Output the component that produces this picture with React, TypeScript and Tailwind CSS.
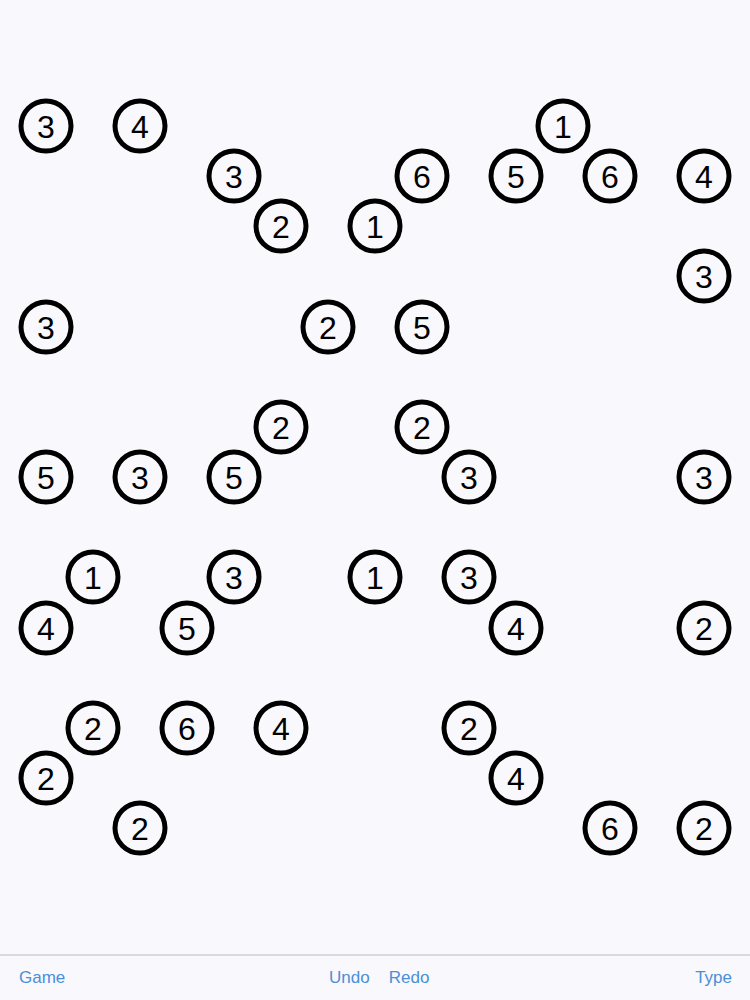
import React from "react";

// [col, row, value] on a 15x15 board
const islands: [number, number, number][] = [
  [0, 0, 3], [2, 0, 4], [11, 0, 1],
  [4, 1, 3], [8, 1, 6], [10, 1, 5], [12, 1, 6], [14, 1, 4],
  [5, 2, 2], [7, 2, 1],
  [14, 3, 3],
  [0, 4, 3], [6, 4, 2], [8, 4, 5],
  [5, 6, 2], [8, 6, 2],
  [0, 7, 5], [2, 7, 3], [4, 7, 5], [9, 7, 3], [14, 7, 3],
  [1, 9, 1], [4, 9, 3], [7, 9, 1], [9, 9, 3],
  [0, 10, 4], [3, 10, 5], [10, 10, 4], [14, 10, 2],
  [1, 12, 2], [3, 12, 6], [5, 12, 4], [9, 12, 2],
  [0, 13, 2], [10, 13, 4],
  [2, 14, 2], [12, 14, 6], [14, 14, 2],
];

const COL = 47;
const ROW = 50.15;
const X0 = 46;
const Y0 = 126;

export default function App() {
  return (
    <div
      className="w-[750px] h-[1000px] flex flex-col bg-[#f8f8fd] overflow-hidden"
      style={{ fontFamily: '"Liberation Sans", Arial, sans-serif' }}
    >
      <div className="relative flex-1">
        {islands.map(([c, r, v]) => (
          <div
            key={`${c}-${r}`}
            className="absolute w-[55px] h-[55px] -translate-x-1/2 -translate-y-1/2 rounded-full border-[5px] border-black bg-[#f8f8fd] flex items-center justify-center text-[32px] leading-none text-black"
            style={{ left: X0 + COL * c, top: Y0 + ROW * r }}
          >
            <span className="pt-[1px]">{v}</span>
          </div>
        ))}
      </div>
      <div className="h-[46px] shrink-0 border-t-2 border-[#d9d9de] flex items-center justify-between pl-[19px] pr-[18px] text-[17px] text-[#4a8fd9]">
        <span>Game</span>
        <div className="flex gap-[19px] mr-[2px]">
          <span>Undo</span>
          <span>Redo</span>
        </div>
        <span>Type</span>
      </div>
    </div>
  );
}
